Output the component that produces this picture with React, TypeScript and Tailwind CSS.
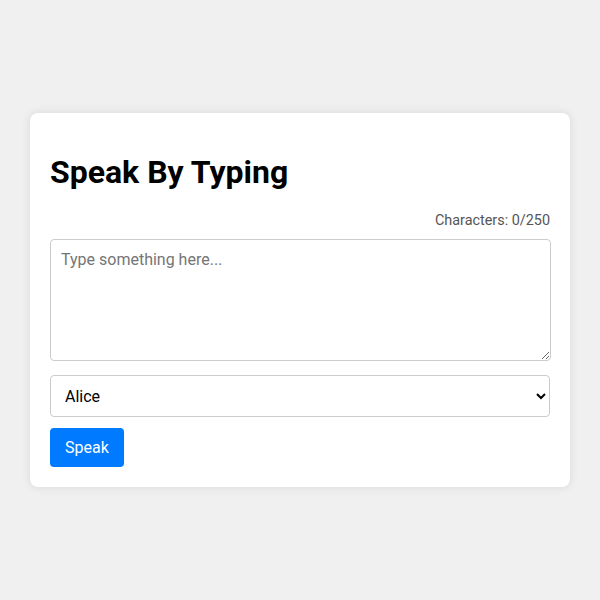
import { useState } from 'react'

const VOICES: readonly string[] = ['Alice', 'Bob', 'Charlie']

export default function App(): JSX.Element {
  const [text, setText] = useState('')
  const [voice, setVoice] = useState(VOICES[0])

  return (
    <main className="flex min-h-screen items-center justify-center bg-[#f0f0f0] font-['Roboto',sans-serif]">
      <section className="w-[540px] rounded-lg bg-white p-5 shadow-[0_0_10px_rgba(0,0,0,0.1)]">
        <h1 className="my-[21px] text-[32px] leading-[37px] font-bold text-black">Speak By Typing</h1>
        <p className="mt-[2px] text-right text-[14.4px] leading-[17px] text-[#555]">
          Characters: {text.length}/250
        </p>
        <textarea
          value={text}
          maxLength={250}
          onChange={(e) => setText(e.target.value)}
          placeholder="Type something here..."
          className="mt-2.5 block h-[122px] w-[501px] rounded border border-[#ccc] p-2.5 text-base leading-[19px] text-black placeholder:text-[#757575]"
        />
        <select
          value={voice}
          onChange={(e) => setVoice(e.target.value)}
          className="mt-[14px] block h-[42px] w-full rounded border border-[#ccc] bg-white px-2.5 text-base text-black"
        >
          {VOICES.map((v) => (
            <option key={v} value={v}>
              {v}
            </option>
          ))}
        </select>
        <button
          type="button"
          className="mt-[11px] rounded bg-[#007bff] px-[15px] py-2.5 text-base leading-[19px] text-white"
        >
          Speak
        </button>
      </section>
    </main>
  )
}
